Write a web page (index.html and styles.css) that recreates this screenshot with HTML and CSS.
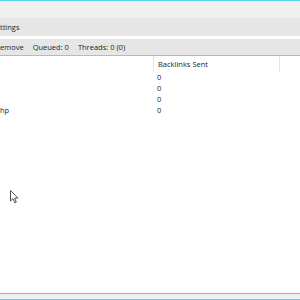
FILE: index.html
```html
<!DOCTYPE html>
<html lang="en">
<head>
    <meta charset="UTF-8">
    <meta name="viewport" content="width=device-width, initial-scale=1.0">
    <title>Backlinks</title>
    <link rel="stylesheet" href="styles.css">
</head>
<body>
    <div class="window">
        <div class="titlebar"></div>
        <div class="menubar"><span>ttings</span></div>
        <div class="toolbar">
            <span>emove</span>
            <span>Queued: 0</span>
            <span>Threads: 0 (0)</span>
        </div>

        <div class="list">
            <div class="row head">
                <div class="col col-url"></div>
                <div class="col col-sent">Backlinks Sent</div>
                <div class="col col-rest"></div>
            </div>
            <div class="row">
                <div class="col col-url"></div>
                <div class="col col-sent">0</div>
            </div>
            <div class="row">
                <div class="col col-url"></div>
                <div class="col col-sent">0</div>
            </div>
            <div class="row">
                <div class="col col-url"></div>
                <div class="col col-sent">0</div>
            </div>
            <div class="row">
                <div class="col col-url">hp</div>
                <div class="col col-sent">0</div>
            </div>

            <!-- mouse pointer -->
            <svg class="pointer" width="9" height="14" viewBox="0 0 9 14">
                <path d="M0.5 0.5 L0.5 11 L3 8.6 L4.8 12.8 L6.3 12.1 L4.6 8.1 L8 8.1 Z" fill="#fff" stroke="#555" stroke-width="1"/>
            </svg>
        </div>

        <div class="statusbar"></div>
    </div>
</body>
</html>
```

FILE: styles.css
```css
body {
    margin: 0;
    font-family: "Open Sans", "Noto Sans", sans-serif;
    font-size: 7.5px;
    color: #1e1e1e;
    background: #fff;
}
.window {
    display: flex;
    flex-direction: column;
    width: 300px;
    height: 300px;
    overflow: hidden;
}
.titlebar {
    height: 17px;
    border-top: 1px solid #5ad3f3;
    background-color: #f0f0f0;
}
.menubar {
    display: flex;
    align-items: center;
    height: 18px;
    background-color: #e6e6e6;
    white-space: nowrap;
}
.toolbar {
    display: flex;
    align-items: center;
    gap: 9px;
    height: 16px;
    margin-top: 3px;
    background-color: #e6e6e6;
    border-bottom: 1px solid #b9b9b9;
    white-space: nowrap;
}

.list {
    flex: 1;
    position: relative;
}
.row {
    display: flex;
    height: 11px;
    line-height: 11px;
}
.row.head {
    height: 16px;
    line-height: 17px;
}
.col {
    white-space: nowrap;
}
.col-url {
    width: 153px;
}
.col-sent {
    width: 126px;
    padding-left: 4px;
    box-sizing: border-box;
}
.head .col-url,
.head .col-sent {
    border-right: 1px solid #e3e3e3;
}
.pointer {
    position: absolute;
    left: 10px;
    top: 134px;
}
.statusbar {
    height: 5px;
    border-top: 1px solid #a9a9a9;
    border-bottom: 1px solid #5ad3f3;
    background-color: #f0f0f0;
}
```
